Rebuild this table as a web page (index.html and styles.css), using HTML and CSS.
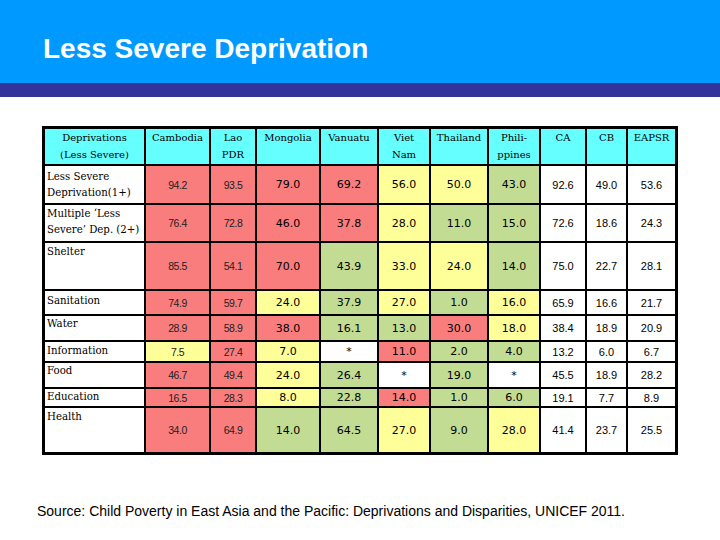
FILE: index.html
```html
<!DOCTYPE html>
<html>
<head>
<meta charset="utf-8">
<link rel="stylesheet" href="styles.css">
</head>
<body>
<div class="header"><h1 class="title">Less Severe Deprivation</h1></div>
<div class="band"></div>
<div class="table">
  <div class="c h">Deprivations<br>(Less Severe)</div>
  <div class="c h">Cambodia</div>
  <div class="c h">Lao<br>PDR</div>
  <div class="c h">Mongolia</div>
  <div class="c h">Vanuatu</div>
  <div class="c h">Viet<br>Nam</div>
  <div class="c h">Thailand</div>
  <div class="c h">Phili-<br>ppines</div>
  <div class="c h">CA</div>
  <div class="c h">CB</div>
  <div class="c h">EAPSR</div>

  <div class="c lab p3">Less Severe<br>Deprivation(1+)</div>
  <div class="c v s r">94.2</div><div class="c v s r">93.5</div>
  <div class="c v m r">79.0</div><div class="c v m r">69.2</div><div class="c v m y">56.0</div><div class="c v m y">50.0</div><div class="c v m g">43.0</div>
  <div class="c v n">92.6</div><div class="c v n">49.0</div><div class="c v n">53.6</div>

  <div class="c lab p1">Multiple ‘Less<br>Severe’ Dep. (2+)</div>
  <div class="c v s r">76.4</div><div class="c v s r">72.8</div>
  <div class="c v m r">46.0</div><div class="c v m r">37.8</div><div class="c v m y">28.0</div><div class="c v m g">11.0</div><div class="c v m g">15.0</div>
  <div class="c v n">72.6</div><div class="c v n">18.6</div><div class="c v n">24.3</div>

  <div class="c lab p1">Shelter</div>
  <div class="c v s r">85.5</div><div class="c v s r">54.1</div>
  <div class="c v m r">70.0</div><div class="c v m g">43.9</div><div class="c v m y">33.0</div><div class="c v m y">24.0</div><div class="c v m g">14.0</div>
  <div class="c v n">75.0</div><div class="c v n">22.7</div><div class="c v n">28.1</div>

  <div class="c lab p2">Sanitation</div>
  <div class="c v s r">74.9</div><div class="c v s r">59.7</div>
  <div class="c v m y">24.0</div><div class="c v m g">37.9</div><div class="c v m y">27.0</div><div class="c v m g">1.0</div><div class="c v m y">16.0</div>
  <div class="c v n">65.9</div><div class="c v n">16.6</div><div class="c v n">21.7</div>

  <div class="c lab p0">Water</div>
  <div class="c v s r">28.9</div><div class="c v s r">58.9</div>
  <div class="c v m r">38.0</div><div class="c v m g">16.1</div><div class="c v m g">13.0</div><div class="c v m r">30.0</div><div class="c v m y">18.0</div>
  <div class="c v n">38.4</div><div class="c v n">18.9</div><div class="c v n">20.9</div>

  <div class="c lab p1">Information</div>
  <div class="c v s y">7.5</div><div class="c v s r">27.4</div>
  <div class="c v m y">7.0</div><div class="c v m">*</div><div class="c v m r">11.0</div><div class="c v m g">2.0</div><div class="c v m g">4.0</div>
  <div class="c v n">13.2</div><div class="c v n">6.0</div><div class="c v n">6.7</div>

  <div class="c lab p0">Food</div>
  <div class="c v s r">46.7</div><div class="c v s r">49.4</div>
  <div class="c v m y">24.0</div><div class="c v m g">26.4</div><div class="c v m">*</div><div class="c v m g">19.0</div><div class="c v m">*</div>
  <div class="c v n">45.5</div><div class="c v n">18.9</div><div class="c v n">28.2</div>

  <div class="c lab p0">Education</div>
  <div class="c v s r">16.5</div><div class="c v s r">28.3</div>
  <div class="c v m y">8.0</div><div class="c v m g">22.8</div><div class="c v m r">14.0</div><div class="c v m g">1.0</div><div class="c v m g">6.0</div>
  <div class="c v n">19.1</div><div class="c v n">7.7</div><div class="c v n">8.9</div>

  <div class="c lab p1">Health</div>
  <div class="c v s r">34.0</div><div class="c v s r">64.9</div>
  <div class="c v m g">14.0</div><div class="c v m g">64.5</div><div class="c v m y">27.0</div><div class="c v m g">9.0</div><div class="c v m y">28.0</div>
  <div class="c v n">41.4</div><div class="c v n">23.7</div><div class="c v n">25.5</div>
</div>
<p class="source">Source: Child Poverty in East Asia and the Pacific: Deprivations and Disparities, UNICEF 2011.</p>
</body>
</html>
```
FILE: styles.css
```css
html, body {
  margin: 0;
  padding: 0;
  background: #ffffff;
}

.header {
  height: 83px;
  background: #0099ff;
  box-sizing: border-box;
  padding: 33px 0 0 43px;
}

.title {
  margin: 0;
  font-family: "Liberation Sans", Arial, sans-serif;
  font-weight: bold;
  font-size: 28px;
  line-height: 32px;
  color: #ffffff;
}

.band {
  height: 14px;
  background: #333399;
}

.table {
  display: grid;
  width: max-content;
  margin: 29px 0 0 42px;
  padding: 3px;
  gap: 2px;
  background: #000000;
  grid-template-columns: 99px 63px 44px 62px 56px 50px 56px 50px 44px 39px 47px;
  grid-template-rows: 35px 37px 36px 46px 23px 24px 19px 24px 17px 44px;
}

.c {
  background: #ffffff;
  color: #000000;
  overflow: visible;
  box-sizing: border-box;
}

.h {
  background: #66ffff;
  font-family: "DejaVu Serif", serif;
  font-size: 10px;
  line-height: 17px;
  text-align: center;
  padding-top: 0;
}

.lab {
  font-family: "DejaVu Serif", serif;
  font-size: 10.2px;
  line-height: 16px;
  padding-left: 2px;
  white-space: nowrap;
}

.p0 { padding-top: 0; }
.p1 { padding-top: 1px; }
.p2 { padding-top: 2px; }
.p3 { padding-top: 3px; }

.v {
  display: flex;
  align-items: center;
  justify-content: center;
}

.s {
  font-family: "Liberation Sans", Arial, sans-serif;
  font-size: 10.5px;
  letter-spacing: -0.5px;
  color: #222222;
}

.m {
  font-family: "DejaVu Sans", sans-serif;
  font-size: 11px;
}

.n {
  font-family: "Liberation Sans", Arial, sans-serif;
  font-size: 11px;
}

.r { background: #fa7d7d; }
.y { background: #ffff99; }
.g { background: #c3dc93; }

.source {
  margin: 49px 0 0 37px;
  font-family: "Liberation Sans", Arial, sans-serif;
  font-size: 14px;
  line-height: 15px;
  color: #000000;
}
```
